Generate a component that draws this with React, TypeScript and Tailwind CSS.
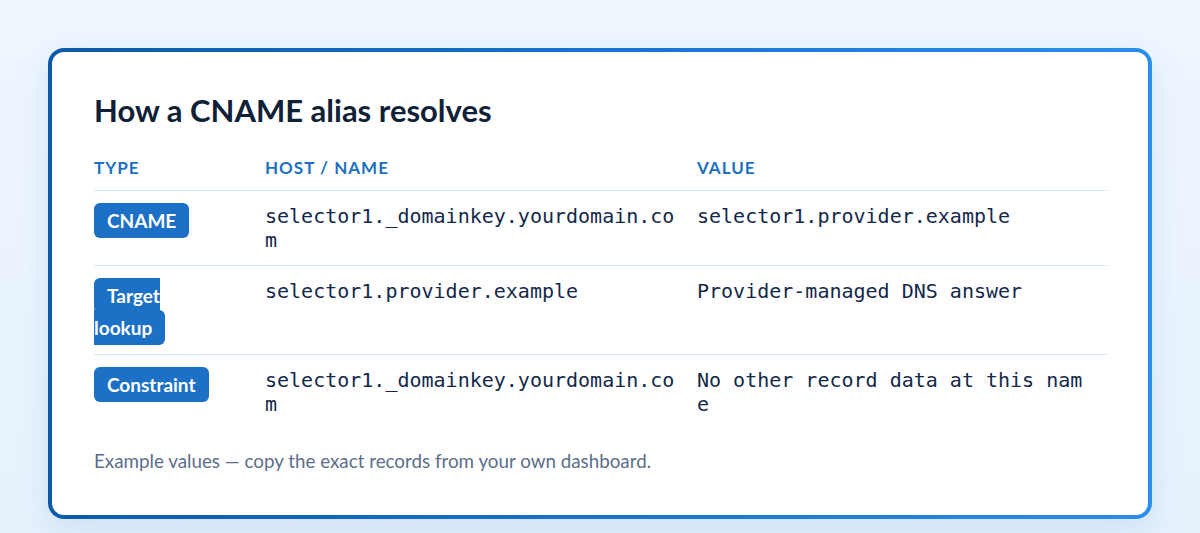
import React from "react";

const sans = { fontFamily: "Lato, 'Noto Sans', sans-serif" } as React.CSSProperties;

const rows = [
  { type: "CNAME", host: "selector1._domainkey.yourdomain.com", value: "selector1.provider.example" },
  { type: "Target lookup", host: "selector1.provider.example", value: "Provider-managed DNS answer" },
  { type: "Constraint", host: "selector1._domainkey.yourdomain.com", value: "No other record data at this name" },
];

export default function App() {
  return (
    <div
      className="w-[1200px] h-[533px] bg-gradient-to-b from-[#eef6fe] to-[#e6f1fc] px-[48px] pt-[48px]"
      style={sans}
    >
      <div className="rounded-[16px] p-[4px] bg-gradient-to-r from-[#0b5aa8] via-[#1673cf] to-[#2a8eea] shadow-[0_10px_30px_rgba(30,110,200,0.12)]">
        <div className="rounded-[12px] bg-white px-[42px] pt-[40px] pb-[41px]">
          <h1 className="text-[31px] leading-[36px] font-bold text-[#0f2136] mb-[28px]">
            How a CNAME alias resolves
          </h1>
          <div className="grid grid-cols-[171px_432px_410px]">
            <div className="text-[17px] leading-[24px] font-bold tracking-[0.06em] text-[#1d6fc0] pb-[10px] border-b border-[#d8e7f6]">TYPE</div>
            <div className="text-[17px] leading-[24px] font-bold tracking-[0.06em] text-[#1d6fc0] pb-[10px] border-b border-[#d8e7f6]">HOST / NAME</div>
            <div className="text-[17px] leading-[24px] font-bold tracking-[0.06em] text-[#1d6fc0] pb-[10px] border-b border-[#d8e7f6]">VALUE</div>
            {rows.map((r, i) => {
              const b = i < rows.length - 1 ? "border-b border-[#d8e7f6]" : "";
              return (
                <React.Fragment key={i}>
                  <div className={`pt-[14px] pb-[10px] pr-[60px] leading-[31px] ${b}`}>
                    <span className="bg-[#1c70c6] text-white font-bold text-[19px] px-[13px] py-[6px] rounded-[6px] [box-decoration-break:slice]">
                      {r.type}
                    </span>
                  </div>
                  <div
                    className={`pt-[13px] pb-[13px] pr-[16px] text-[20px] leading-[24px] text-[#13294a] break-all ${b}`}
                    style={{ fontFamily: "'DejaVu Sans Mono', monospace" }}
                  >
                    {r.host}
                  </div>
                  <div
                    className={`pt-[13px] pb-[13px] pr-[16px] text-[20px] leading-[24px] text-[#13294a] break-all ${b}`}
                    style={{ fontFamily: "'DejaVu Sans Mono', monospace" }}
                  >
                    {r.value}
                  </div>
                </React.Fragment>
              );
            })}
          </div>
          <p className="mt-[19px] text-[18.8px] leading-[26px] text-[#5b6e89]">
            Example values — copy the exact records from your own dashboard.
          </p>
        </div>
      </div>
    </div>
  );
}
